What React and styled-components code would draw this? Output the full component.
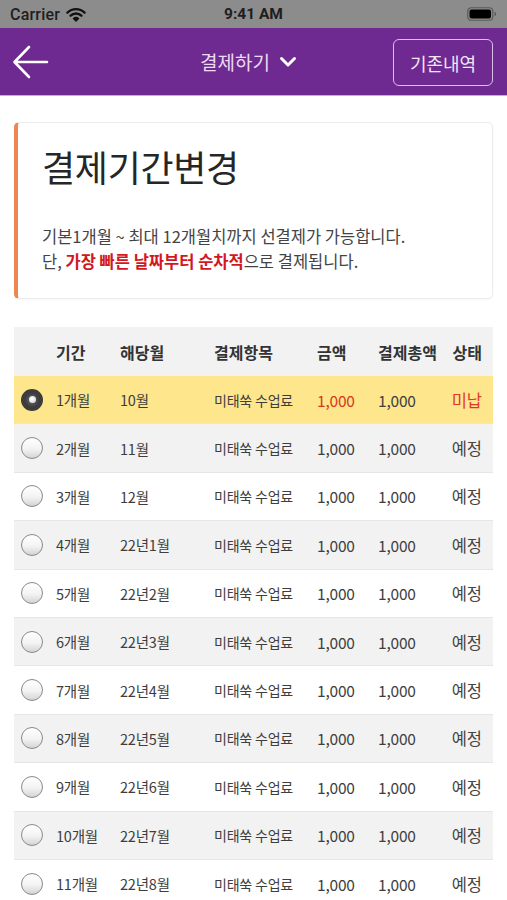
import styled, { createGlobalStyle } from "styled-components";

const GlobalStyle = createGlobalStyle`
  html, body {
    margin: 0;
    padding: 0;
    background: #ffffff;
  }
  body {
    font-family: "Noto Sans CJK KR", "Noto Sans", sans-serif;
    -webkit-font-smoothing: antialiased;
  }
`;

const rows = [
  { period: "1개월", month: "10월", selected: true, status: "미납" },
  { period: "2개월", month: "11월" },
  { period: "3개월", month: "12월" },
  { period: "4개월", month: "22년1월" },
  { period: "5개월", month: "22년2월" },
  { period: "6개월", month: "22년3월" },
  { period: "7개월", month: "22년4월" },
  { period: "8개월", month: "22년5월" },
  { period: "9개월", month: "22년6월" },
  { period: "10개월", month: "22년7월" },
  { period: "11개월", month: "22년8월" },
];

const WifiIcon = () => (
  <svg width="20" height="15" viewBox="0 0 18 14">
    <path d="M1 5.2 A11.5 11.5 0 0 1 17 5.2" stroke="#111" strokeWidth="2.2" fill="none" strokeLinecap="round" />
    <path d="M3.9 8.1 A7.4 7.4 0 0 1 14.1 8.1" stroke="#111" strokeWidth="2.2" fill="none" strokeLinecap="round" />
    <path d="M6.6 10.7 A3.6 3.6 0 0 1 11.4 10.7 L9 13.2 Z" fill="#111" stroke="#111" strokeWidth="1.2" strokeLinejoin="round" />
  </svg>
);

const BatteryIcon = () => (
  <svg width="30" height="14" viewBox="0 0 30 14">
    <rect x="0.75" y="0.75" width="25" height="12.5" rx="3.5" fill="none" stroke="#5a5a5a" strokeWidth="1.2" />
    <rect x="2.5" y="2.5" width="21.5" height="9" rx="2" fill="#000" />
    <path d="M27.5 4.8 Q29.2 5.2 29.2 7 Q29.2 8.8 27.5 9.2 Z" fill="#5a5a5a" />
  </svg>
);

const BackArrow = () => (
  <svg width="38" height="34" viewBox="0 0 38 34">
    <path d="M35 17 H3 M17 2 L2.5 17 L17 32" stroke="#fff" strokeWidth="2.6" fill="none" strokeLinecap="round" strokeLinejoin="round" />
  </svg>
);

const Chevron = () => (
  <svg width="18" height="12" viewBox="0 0 18 12">
    <path d="M2.5 2.5 L9 9 L15.5 2.5" stroke="#fff" strokeWidth="3" fill="none" strokeLinecap="round" strokeLinejoin="round" />
  </svg>
);

const Radio = ({ checked }) => (
  <RadioCircle checked={checked}>
    {checked && <RadioDot />}
  </RadioCircle>
);

const App = () => {
  return (
    <>
      <GlobalStyle />
      <Page>
        <StatusBar>
          <Carrier>
            Carrier <WifiIcon />
          </Carrier>
          <Clock>9:41 AM</Clock>
          <BatteryWrap>
            <BatteryIcon />
          </BatteryWrap>
        </StatusBar>
        <NavBar>
          <BackButton>
            <BackArrow />
          </BackButton>
          <NavTitle>
            결제하기 <Chevron />
          </NavTitle>
          <HistoryButton>기존내역</HistoryButton>
        </NavBar>
        <Content>
          <InfoCard>
            <CardTitle>결제기간변경</CardTitle>
            <CardText>
              기본1개월 ~ 최대 12개월치까지 선결제가 가능합니다.
              <br />
              단, <Highlight>가장 빠른 날짜부터 순차적</Highlight>으로 결제됩니다.
            </CardText>
          </InfoCard>
          <Table>
            <HeaderRow>
              <span />
              <HeadCell>기간</HeadCell>
              <HeadCell>해당월</HeadCell>
              <HeadCell>결제항목</HeadCell>
              <HeadCell>금액</HeadCell>
              <HeadCell>결제총액</HeadCell>
              <HeadCell align="right">상태</HeadCell>
            </HeaderRow>
            {rows.map((row, i) => (
              <Row key={row.period} selected={row.selected} shaded={i % 2 === 1}>
                <RadioCell>
                  <Radio checked={row.selected} />
                </RadioCell>
                <Cell>{row.period}</Cell>
                <Cell>{row.month}</Cell>
                <Cell small>미태쑥 수업료</Cell>
                <Cell num red={row.selected}>1,000</Cell>
                <Cell num>1,000</Cell>
                <Status red={row.selected}>{row.status || "예정"}</Status>
              </Row>
            ))}
          </Table>
        </Content>
      </Page>
    </>
  );
};

export default App;

const Page = styled.div`
  width: 507px;
  min-height: 900px;
  background: #ffffff;
  overflow: hidden;
`;

const StatusBar = styled.div`
  height: 28px;
  background: #8c8c8c;
  display: grid;
  grid-template-columns: 1fr auto 1fr;
  align-items: center;
  padding: 0 10px;
  font-family: "Roboto", "Liberation Sans", sans-serif;
  font-size: 16px;
  color: #1e1e1e;
`;

const Carrier = styled.div`
  display: flex;
  align-items: center;
  gap: 6px;
  font-weight: 500;
  letter-spacing: 0.2px;
`;

const Clock = styled.div`
  font-weight: 700;
  text-align: center;
  font-size: 15.5px;
`;

const BatteryWrap = styled.div`
  display: flex;
  justify-content: flex-end;
`;

const NavBar = styled.div`
  height: 67px;
  background: #6f2a91;
  border-bottom: 1px solid #c9a8dc;
  display: grid;
  grid-template-columns: 1fr auto 1fr;
  align-items: center;
  padding: 0 14px 0 12px;
`;

const BackButton = styled.div`
  display: flex;
  align-items: center;
`;

const NavTitle = styled.div`
  display: flex;
  align-items: center;
  gap: 9px;
  font-size: 19px;
  color: #ecdcf2;
  margin-left: -8px;
  line-height: 1;
`;

const HistoryButton = styled.div`
  justify-self: end;
  width: 100px;
  height: 47px;
  box-sizing: border-box;
  border: 1.5px solid #dcbfe9;
  border-radius: 6px;
  display: flex;
  align-items: center;
  justify-content: center;
  font-size: 18px;
  color: #f1e6f5;
  margin-top: 2px;
`;

const Content = styled.div`
  padding: 26px 14px 0;
  display: flex;
  flex-direction: column;
  gap: 28px;
`;

const InfoCard = styled.div`
  height: 177px;
  box-sizing: border-box;
  border: 1px solid #ececec;
  border-left: 4px solid #ef8550;
  border-radius: 5px;
  padding: 19px 0 0 24px;
  box-shadow: 0 1px 2px rgba(0, 0, 0, 0.04);
`;

const CardTitle = styled.h1`
  margin: 0;
  font-size: 36px;
  font-weight: 400;
  line-height: 48px;
  color: #262626;
  letter-spacing: -0.3px;
`;

const CardText = styled.p`
  margin: 34px 0 0;
  font-size: 16.5px;
  line-height: 25px;
  color: #444444;
  letter-spacing: 0;
`;

const Highlight = styled.span`
  color: #d31722;
  font-weight: 700;
`;

const Table = styled.div`
  display: flex;
  flex-direction: column;
`;

const columns = "42px 64px 94px 103px 61px 1fr 42px";

const HeaderRow = styled.div`
  display: grid;
  grid-template-columns: ${columns};
  align-items: center;
  height: 49px;
  background: #f2f2f2;
  padding-right: 11px;
`;

const HeadCell = styled.div`
  font-size: 16px;
  font-weight: 700;
  color: #333333;
  text-align: ${(props) => props.align || "left"};
  white-space: nowrap;
`;

const Row = styled.div`
  display: grid;
  grid-template-columns: ${columns};
  align-items: center;
  height: 48.4px;
  box-sizing: border-box;
  padding-right: 11px;
  border-bottom: 1px solid #e6e6e6;
  background: ${(props) =>
    props.selected ? "#fde68c" : props.shaded ? "#f2f2f2" : "#ffffff"};
`;

const RadioCell = styled.div`
  display: flex;
  align-items: center;
  padding-left: 7px;
`;

const RadioCircle = styled.div`
  width: 22px;
  height: 22px;
  box-sizing: border-box;
  border-radius: 50%;
  display: flex;
  align-items: center;
  justify-content: center;
  border: ${(props) => (props.checked ? "4px solid #3c3c3c" : "1.5px solid #8a8a8a")};
  background: ${(props) =>
    props.checked
      ? "radial-gradient(circle at 50% 50%, #6a6a6a 0%, #2c2c2c 100%)"
      : "linear-gradient(180deg, #ffffff 0%, #f3f3f3 55%, #d4d4d4 100%)"};
`;

const RadioDot = styled.div`
  width: 7px;
  height: 7px;
  border-radius: 50%;
  background: radial-gradient(circle at 40% 40%, #ffffff 0%, #cfcfcf 100%);
`;

const Cell = styled.div`
  font-size: ${(props) => (props.small ? "14px" : props.num ? "15.5px" : "14.5px")};
  color: ${(props) => (props.red ? "#d9361c" : "#3e3e3e")};
  white-space: nowrap;
  letter-spacing: -0.2px;
`;

const Status = styled.div`
  text-align: right;
  font-size: 16.5px;
  color: ${(props) => (props.red ? "#e0372a" : "#444444")};
  white-space: nowrap;
`;
